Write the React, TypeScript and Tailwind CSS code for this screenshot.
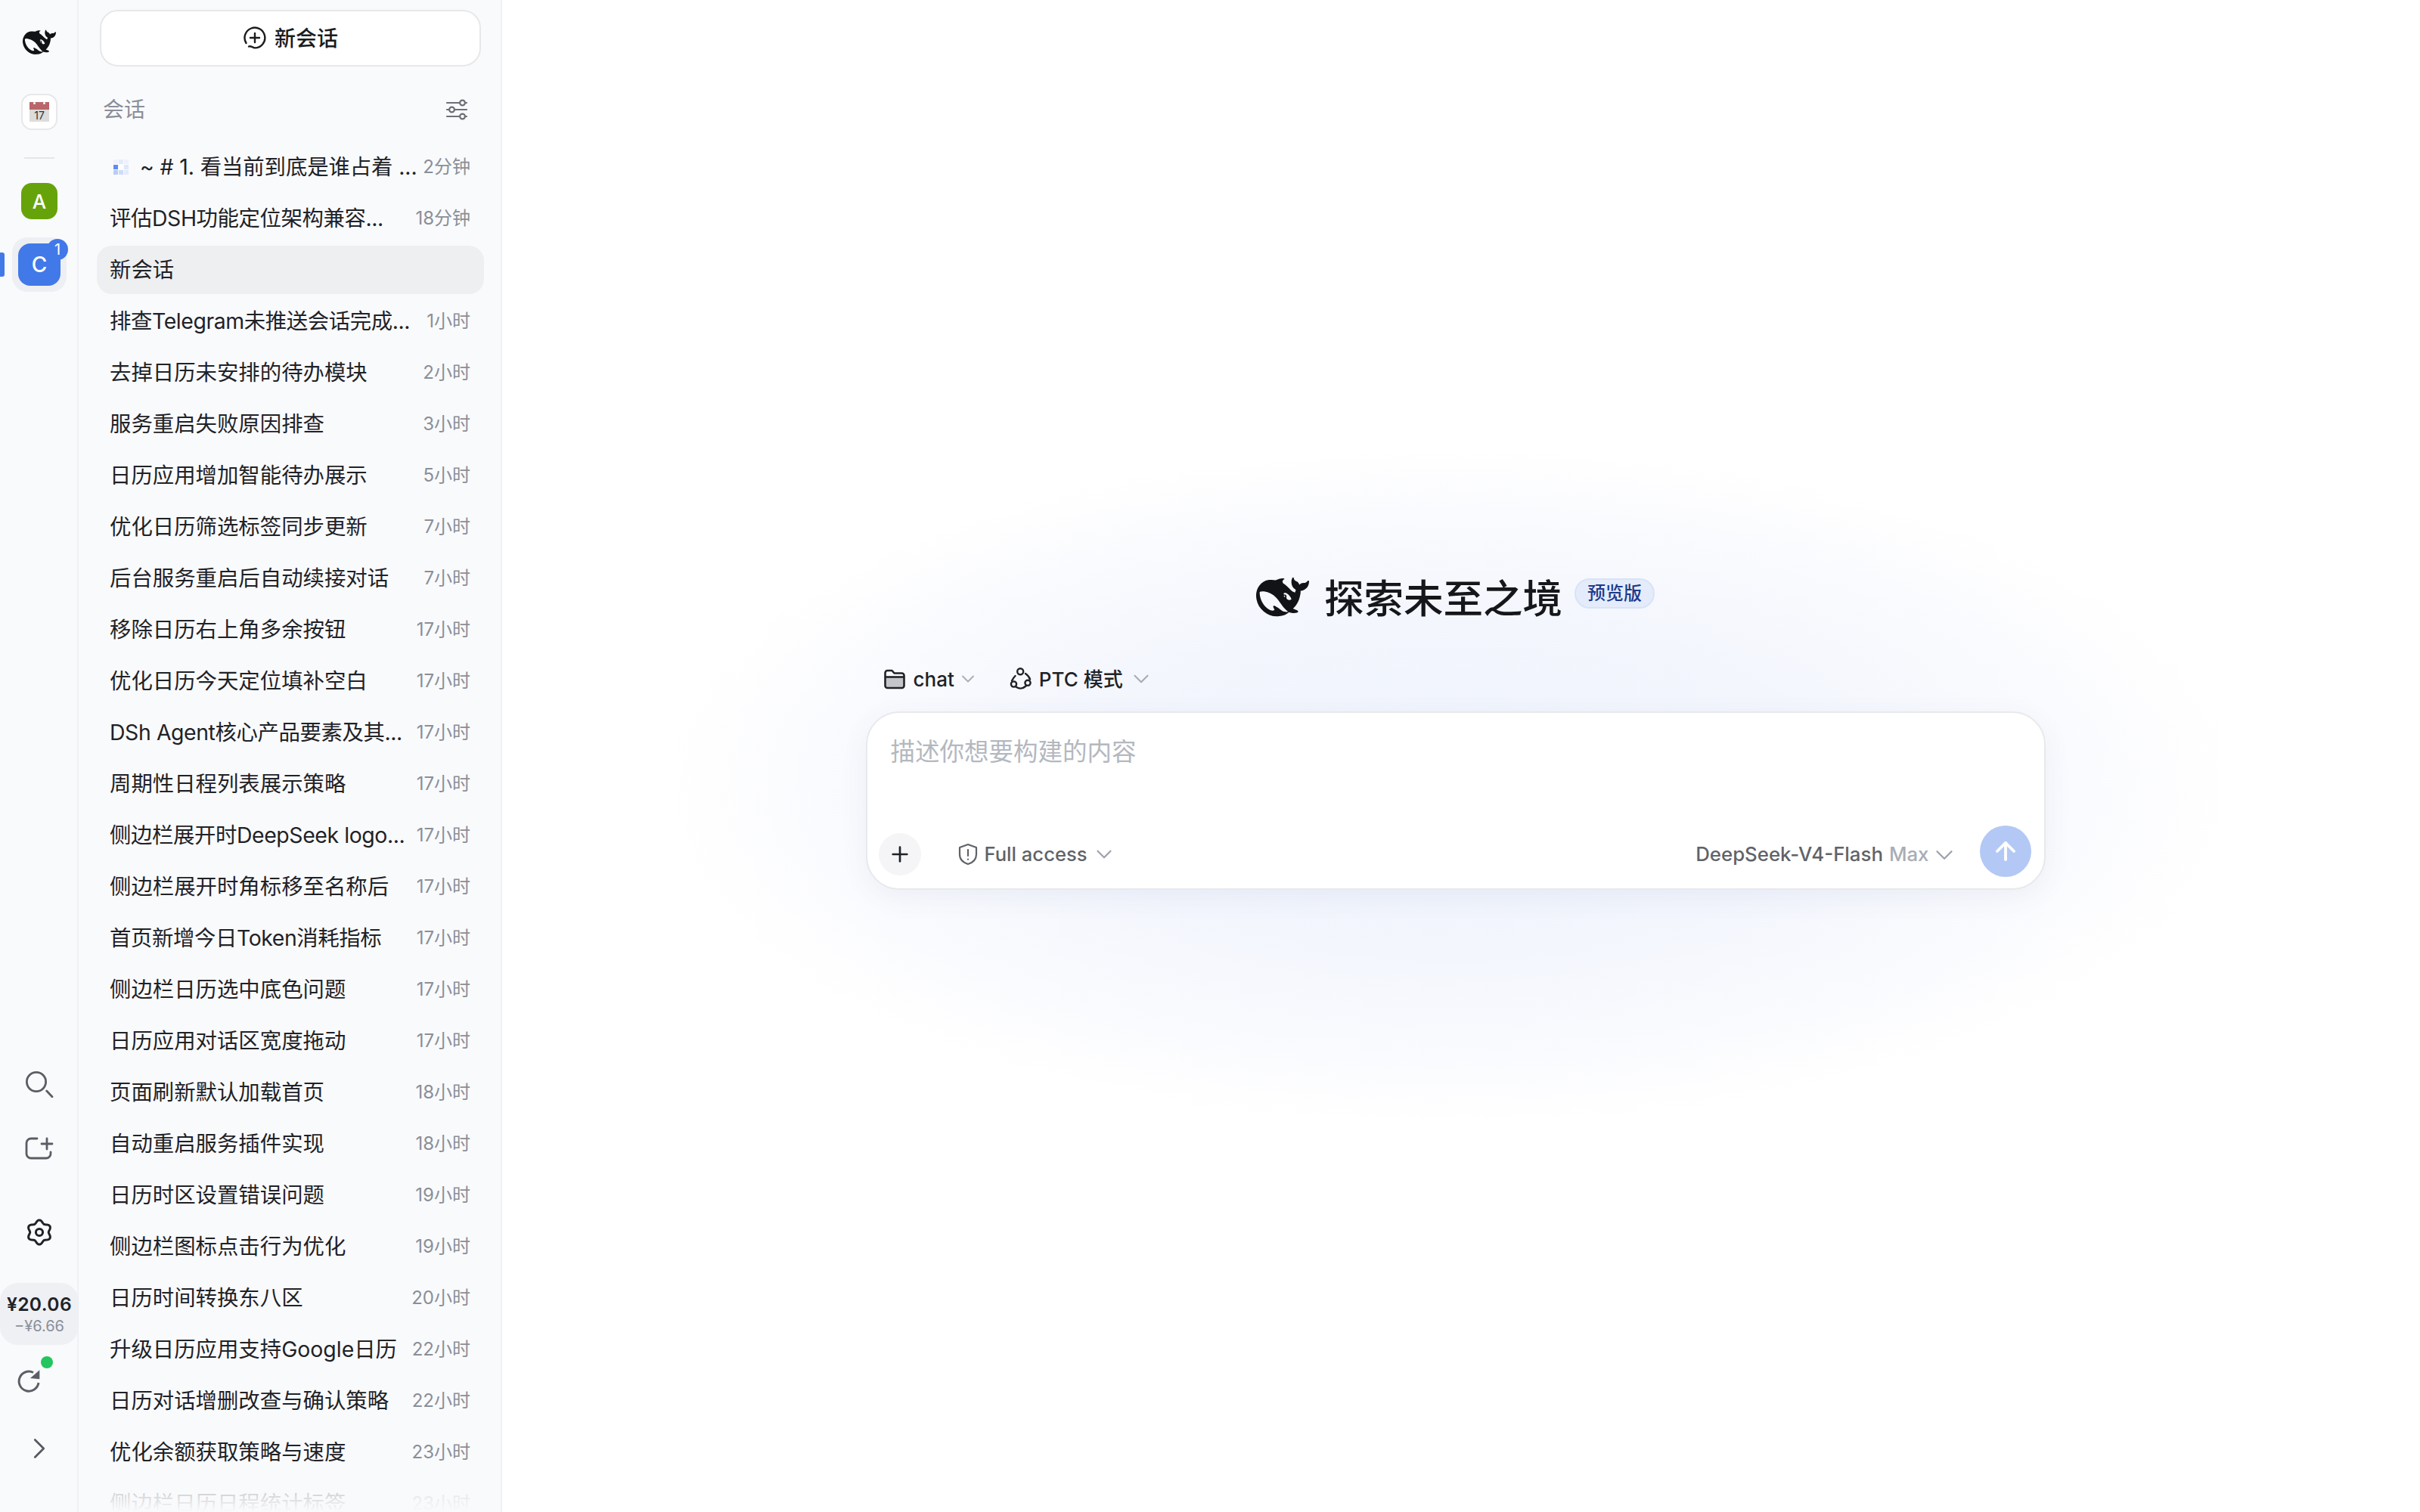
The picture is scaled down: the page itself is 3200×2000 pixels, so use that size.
import React from "react";
import { ArrowUp, ChevronDown, ChevronRight, Plus } from "lucide-react";

const whalePath =
  "M23.748 4.482c-.254-.124-.364.113-.512.234-.051.039-.094.09-.137.136-.372.397-.806.657-1.373.626-.829-.046-1.537.214-2.163.848-.133-.782-.575-1.248-1.247-1.548-.352-.156-.708-.311-.955-.65-.172-.241-.219-.51-.305-.774-.055-.16-.11-.323-.293-.35-.2-.031-.278.136-.356.276-.313.572-.434 1.202-.422 1.84.027 1.436.633 2.58 1.838 3.393.137.093.172.187.129.323-.082.28-.18.552-.266.833-.055.179-.137.217-.329.14a5.526 5.526 0 01-1.736-1.18c-.857-.828-1.631-1.742-2.597-2.458a11.365 11.365 0 00-.689-.471c-.985-.957.13-1.743.388-1.836.27-.098.093-.432-.779-.428-.872.004-1.67.295-2.687.684a3.055 3.055 0 01-.465.137 9.597 9.597 0 00-2.883-.102c-1.885.21-3.39 1.102-4.497 2.623C.082 8.606-.231 10.684.152 12.85c.403 2.284 1.569 4.175 3.36 5.653 1.858 1.533 3.997 2.284 6.438 2.14 1.482-.085 3.133-.284 4.994-1.86.47.234.962.327 1.78.397.63.059 1.236-.03 1.705-.128.735-.156.684-.837.419-.961-2.155-1.004-1.682-.595-2.113-.926 1.096-1.296 2.746-2.642 3.392-7.003.05-.347.007-.565 0-.845-.004-.17.035-.237.23-.256a4.173 4.173 0 001.545-.475c1.396-.763 1.96-2.015 2.093-3.517.02-.23-.004-.467-.247-.588zM11.581 18c-2.089-1.642-3.102-2.183-3.52-2.16-.392.024-.321.471-.235.763.09.288.207.486.371.739.114.167.192.416-.113.603-.673.416-1.842-.14-1.897-.167-1.361-.802-2.5-1.86-3.301-3.307-.774-1.393-1.224-2.887-1.298-4.482-.02-.386.093-.522.477-.592a4.696 4.696 0 011.529-.039c2.132.312 3.946 1.265 5.468 2.774.868.86 1.525 1.887 2.202 2.891.72 1.066 1.494 2.082 2.48 2.914.348.292.625.514.891.677-.802.09-2.14.11-3.054-.614zm1-6.44a.306.306 0 01.415-.287.302.302 0 01.2.288.306.306 0 01-.31.307.303.303 0 01-.304-.308zm3.11 1.596c-.2.081-.399.151-.59.16a1.245 1.245 0 01-.798-.254c-.274-.23-.47-.358-.552-.758a1.73 1.73 0 01.016-.588c.07-.327-.008-.537-.239-.727-.187-.156-.426-.199-.688-.199a.559.559 0 01-.254-.078c-.11-.054-.2-.19-.114-.358.028-.054.16-.186.192-.21.356-.202.767-.136 1.146.016.352.144.618.408 1.001.782.391.451.462.576.685.914.176.265.336.537.445.848.067.195-.019.354-.25.452z";

// six-lobed gear outline
const gearPath =
  Array.from({ length: 121 }, (_, i) => {
    const a = (i / 120) * Math.PI * 2;
    const r = 14.2 + 1.9 * Math.cos(6 * (a + Math.PI / 2));
    return `${i === 0 ? "M" : "L"}${(20 + r * Math.cos(a)).toFixed(2)} ${(20 + r * Math.sin(a)).toFixed(2)}`;
  }).join("") + "z";

const Whale = ({ className }: { className: string }) => (
  <svg viewBox="0 0 24 24" className={className} fill="#111316">
    <path d={whalePath} />
  </svg>
);

const sessions = [
  { title: "评估DSH功能定位架构兼容...", time: "18分钟", latin: true },
  { title: "新会话", time: "", active: true },
  { title: "排查Telegram未推送会话完成...", time: "1小时", latin: true },
  { title: "去掉日历未安排的待办模块", time: "2小时" },
  { title: "服务重启失败原因排查", time: "3小时" },
  { title: "日历应用增加智能待办展示", time: "5小时" },
  { title: "优化日历筛选标签同步更新", time: "7小时" },
  { title: "后台服务重启后自动续接对话", time: "7小时" },
  { title: "移除日历右上角多余按钮", time: "17小时" },
  { title: "优化日历今天定位填补空白", time: "17小时" },
  { title: "DSh Agent核心产品要素及其...", time: "17小时", latin: true },
  { title: "周期性日程列表展示策略", time: "17小时" },
  { title: "侧边栏展开时DeepSeek logo...", time: "17小时", latin: true },
  { title: "侧边栏展开时角标移至名称后", time: "17小时" },
  { title: "首页新增今日Token消耗指标", time: "17小时", latin: true },
  { title: "侧边栏日历选中底色问题", time: "17小时" },
  { title: "日历应用对话区宽度拖动", time: "17小时" },
  { title: "页面刷新默认加载首页", time: "18小时" },
  { title: "自动重启服务插件实现", time: "18小时" },
  { title: "日历时区设置错误问题", time: "19小时" },
  { title: "侧边栏图标点击行为优化", time: "19小时" },
  { title: "日历时间转换东八区", time: "20小时" },
  { title: "升级日历应用支持Google日历", time: "22小时" },
  { title: "日历对话增删改查与确认策略", time: "22小时" },
  { title: "优化余额获取策略与速度", time: "23小时" },
  { title: "侧边栏日历日程统计标签", time: "23小时" },
];

const Rail = () => (
  <aside className="flex w-[104px] shrink-0 flex-col items-center border-r-2 border-[#f0f1f4] bg-[#f9fafc] pl-[2px]">
    <Whale className="mt-[34px] h-[44px] w-[44px]" />
    <div className="mt-[46px] flex h-[48px] w-[48px] flex-col items-center justify-center rounded-[14px] border-2 border-[#e8e8ea] bg-white">
      <div className="flex h-[10px] w-[26px] justify-around bg-[#b9666b]">
        <div className="h-[3px] w-[3px] rounded-full bg-white" />
        <div className="h-[3px] w-[3px] rounded-full bg-white" />
      </div>
      <div className="flex h-[16px] w-[26px] items-center justify-center bg-[#dcdcdc] text-[14px] leading-none text-[#333]">17</div>
    </div>
    <div className="mt-[36px] h-[2px] w-[40px] bg-[#e5e6ea]" />
    <div className="mt-[32px] flex h-[48px] w-[48px] items-center justify-center rounded-[14px] bg-[#66a30a] text-[26px] font-medium text-white">A</div>
    <div className="relative mt-[24px] flex h-[72px] w-[72px] items-center justify-center rounded-[20px] bg-[#eeeff3]">
      <div className="flex h-[56px] w-[56px] items-center justify-center rounded-[16px] bg-[#4279e8] text-[28px] font-medium text-white">C</div>
      <div className="absolute right-[-2px] top-[2px] flex h-[28px] w-[28px] items-center justify-center rounded-full bg-[#4279e8] text-[20px] text-white">1</div>
      <div className="absolute left-[-16px] top-[20px] h-[32px] w-[6px] rounded-r-[3px] bg-[#4279e8]" />
    </div>
    <div className="flex-1" />
    <svg viewBox="0 0 40 40" className="h-[40px] w-[40px]" fill="none" stroke="#5a5e64" strokeWidth="2.8" strokeLinecap="round">
      <circle cx="16" cy="19" r="12.6" />
      <path d="M29.700 31l7.300 7.700" />
    </svg>
    <svg viewBox="0 0 40 40" className="mt-[48px] h-[40px] w-[40px]" fill="none" stroke="#5a5e64" strokeWidth="2.8" strokeLinecap="round" strokeLinejoin="round">
      <path d="M17 6H9a6 6 0 0 0-6 6v14a6 6 0 0 0 6 6h20a6 6 0 0 0 6-6v-2" />
      <path d="M30 6v14M23 13h14" />
    </svg>
    <svg viewBox="0 0 40 40" className="mt-[70px] h-[40px] w-[40px]" fill="none" stroke="#1f2227" strokeWidth="3">
      <path d={gearPath} />
      <circle cx="20" cy="20" r="4.6" />
    </svg>
    <div className="mt-[47px] flex h-[82px] w-[104px] shrink-0 flex-col items-center justify-center rounded-[24px] bg-[#eef0f4]">
      <div className="text-[24.6px] font-semibold leading-[32px] tracking-[0.4px] text-[#1f2227]">¥20.06</div>
      <div className="text-[20px] leading-[26px] text-[#8a8f98]">−¥6.66</div>
    </div>
    <div className="relative mt-[29px] h-[36px] w-full shrink-0">
      <svg viewBox="0 0 36 36" className="absolute left-[18px] top-0 h-[36px] w-[36px]" fill="none" stroke="#5c6066" strokeWidth="3">
        <path d="M31 21A13 13 0 1 1 24 7.500" />
        <path d="M20 15L32.300 4.300V16.300z" fill="#5c6066" stroke="none" />
      </svg>
      <div className="absolute left-[52px] top-[-14px] h-[16px] w-[16px] rounded-full bg-[#22c55e]" />
    </div>
    <ChevronRight className="mb-[61px] mt-[49px] h-[46px] w-[46px] shrink-0 text-[#55595f]" strokeWidth={1.4} />
  </aside>
);

const Spinner = () => (
  <div className="grid w-[20px] shrink-0 grid-cols-3 gap-[1px]">
    <div className="h-[6px] w-[6px] bg-[#eef2fd]" />
    <div className="h-[6px] w-[6px] bg-[#e4ebfc]" />
    <div className="h-[6px] w-[6px] bg-[#eef2fd]" />
    <div className="h-[6px] w-[6px] bg-[#5f8bf6]" />
    <div className="h-[6px] w-[6px] bg-white" />
    <div className="h-[6px] w-[6px] bg-[#dfe7fb]" />
    <div className="h-[6px] w-[6px] bg-[#b9cbf9]" />
    <div className="h-[6px] w-[6px] bg-[#cfdbfa]" />
    <div className="h-[6px] w-[6px] bg-[#e4ebfc]" />
  </div>
);

const Sidebar = () => (
  <aside className="relative flex w-[560px] shrink-0 flex-col overflow-hidden border-r-2 border-[#f0f1f4] bg-[#f9fafc]">
    <button className="ml-[28px] mr-[26px] mt-[13px] flex h-[75px] shrink-0 items-center justify-center gap-[10px] rounded-[24px] border-2 border-[#e8e8ea] bg-white text-[28px] font-medium text-[#1a1c20]">
      <svg viewBox="0 0 32 32" className="h-[32px] w-[32px]" fill="none" stroke="#1a1c20" strokeWidth="2.4" strokeLinecap="round">
        <path d="M8 26.500C10 25.500 12 27 16 28.400A13.400 13.400 0 1 0 4.500 22" />
        <path d="M16 9v12M10 15h12" />
      </svg>
      新会话
    </button>
    <div className="ml-[32px] mr-[31px] mt-[27px] flex h-[60px] shrink-0 items-center justify-between pr-[12px]">
      <span className="text-[28px] text-[#8a8f98]">会话</span>
      <svg viewBox="0 0 30 30" className="h-[30px] w-[30px]" fill="none" stroke="#6b7078" strokeWidth="2.2" strokeLinecap="round">
        <path d="M2 6h17M26 6h2M2 15h3M12 15h16M2 24h17M26 24h2" />
        <circle cx="22.500" cy="6" r="3.400" />
        <circle cx="8.500" cy="15" r="3.400" />
        <circle cx="22.500" cy="24" r="3.400" />
      </svg>
    </div>
    <div className="ml-[24px] mr-[22px] mt-[14px] flex flex-col gap-[4px]">
      <div className="flex h-[64px] shrink-0 items-center justify-between pl-[22px] pr-[18px]">
        <div className="flex items-center gap-[15px] whitespace-nowrap text-[28.4px] text-[#1f2227]">
          <Spinner />
          <span className="tracking-[-0.1px]">~ # 1. 看当前到底是谁占着 ...</span>
        </div>
        <span className="text-[24px] text-[#8a8f98]">2分钟</span>
      </div>
      {sessions.map((s) => (
        <div
          key={s.title}
          className={`flex h-[64px] shrink-0 items-center justify-between rounded-[20px] pl-[17px] pr-[18px] ${s.active ? "bg-[#eeeff1]" : ""}`}
        >
          <span className={`whitespace-nowrap text-[28.4px] text-[#1f2227] ${s.latin ? "tracking-[-0.4px]" : ""}`}>{s.title}</span>
          <span className="whitespace-nowrap text-[24px] text-[#8a8f98]">{s.time}</span>
        </div>
      ))}
    </div>
    {/* list fades out at the bottom */}
    <div className="absolute bottom-0 left-0 right-0 h-[56px] bg-gradient-to-b from-[#f9fafc]/0 via-[#f9fafc]/80 to-[#f9fafc]" />
  </aside>
);

const Main = () => (
  <main className="relative flex min-w-0 flex-1 flex-col items-center overflow-hidden bg-white pr-[15px] pt-[763px]">
    <div className="absolute left-[234px] top-[600px] h-[880px] w-[2040px] bg-[radial-gradient(ellipse_at_center,#eff3fc_0%,#f3f6fd_35%,#fafbfe_58%,#ffffff_72%)]" />
    <div className="relative flex h-[53px] items-center">
      <Whale className="h-[70px] w-[70px]" />
      <h1 className="ml-[20px] mt-[6px] text-[52.5px] font-medium leading-none text-[#15171a]">探索未至之境</h1>
      <span className="mb-[10px] ml-[16px] flex h-[40px] items-center rounded-full border-2 border-[#d9e3f7] bg-[#e4ecfc] px-[15px] text-[24px] font-medium text-[#1e3a8a]">预览版</span>
    </div>
    <div className="relative w-[1560px]">
      <div className="ml-[22px] mt-[56px] flex h-[52px] items-center text-[26px] font-medium text-[#1f2227]">
        <svg viewBox="0 0 32 32" className="h-[32px] w-[32px]" fill="none" stroke="#1f2227" strokeWidth="2.6" strokeLinejoin="round">
          <path d="M3.500 13.500h25V25a3 3 0 0 1-3 3h-19a3 3 0 0 1-3-3z" fill="#c4c5ca" stroke="none" />
          <path d="M3.500 8a3 3 0 0 1 3-3h6l3 3.500h10a3 3 0 0 1 3 3V25a3 3 0 0 1-3 3h-19a3 3 0 0 1-3-3z" />
          <path d="M3.500 13.500h25" />
        </svg>
        <span className="ml-[9px]">chat</span>
        <ChevronDown className="ml-[4px] h-[28px] w-[28px] text-[#a8adb5]" strokeWidth={1.6} />
        <svg viewBox="0 0 32 32" className="ml-[40px] h-[32px] w-[32px]" fill="none" stroke="#1f2227" strokeWidth="2.4" strokeLinecap="round">
          <circle cx="15.200" cy="6.300" r="4" />
          <circle cx="6.500" cy="23" r="3.600" />
          <circle cx="25" cy="21.300" r="3.600" />
          <path d="M8.500 12C6.500 14 5 16.500 4 18.500M22 9C25 11 27 13.500 28 16.500M9.500 26.500C13 29 18 29.500 22.500 25.500" />
        </svg>
        <span className="ml-[8px]">PTC 模式</span>
        <ChevronDown className="ml-[7px] h-[34px] w-[34px] text-[#a8adb5]" strokeWidth={1.5} />
      </div>
      <div className="mt-[17px] flex h-[236px] flex-col rounded-[44px] border-2 border-[#e8e9ec] bg-white shadow-[0_10px_36px_rgba(70,90,140,0.07)]">
        <div className="ml-[31px] mt-[22px] text-[32.5px] leading-[60px] text-[#b4b8bf]">描述你想要构建的内容</div>
        <div className="flex-1" />
        <div className="mb-[15px] flex h-[68px] items-center pl-[15px] pr-[17px]">
          <button className="mt-[8px] flex h-[56px] w-[56px] items-center justify-center rounded-full bg-[#f5f5f7]">
            <Plus className="h-[32px] w-[32px] text-[#1f2227]" strokeWidth={2} />
          </button>
          <div className="ml-[48px] mt-[9px] flex items-center text-[25.6px] font-medium text-[#5f6368]">
            <svg viewBox="0 0 28 32" className="h-[32px] w-[28px]" fill="none" stroke="#5f6368" strokeWidth="2.2" strokeLinecap="round" strokeLinejoin="round">
              <path d="M14 3l11 4v9c0 6.500-4.500 11-11 13C7.500 27 3 22.500 3 16V7z" />
              <path d="M14 10v8M14 22.500v.2" />
            </svg>
            <span className="ml-[8px]">Full access</span>
            <ChevronDown className="ml-[5px] h-[34px] w-[34px] text-[#9ca1a9]" strokeWidth={1.5} />
          </div>
          <div className="flex-1" />
          <div className="mt-[9px] flex items-center text-[25.8px] font-medium text-[#5f6368]">
            <span>DeepSeek-V4-Flash</span>
            <span className="ml-[8px] text-[#a8adb5]">Max</span>
            <ChevronDown className="ml-[1px] h-[38px] w-[38px] text-[#9ca1a9]" strokeWidth={1.4} />
          </div>
          <button className="ml-[28px] flex h-[68px] w-[68px] items-center justify-center rounded-full bg-[#b3c8f4]">
            <ArrowUp className="h-[38px] w-[38px] text-white" strokeWidth={2.4} />
          </button>
        </div>
      </div>
    </div>
  </main>
);

export default function App() {
  return (
    <div className="flex h-screen w-screen overflow-hidden bg-white font-['Inter','Noto_Sans_CJK_SC',sans-serif]">
      <Rail />
      <Sidebar />
      <Main />
    </div>
  );
}
